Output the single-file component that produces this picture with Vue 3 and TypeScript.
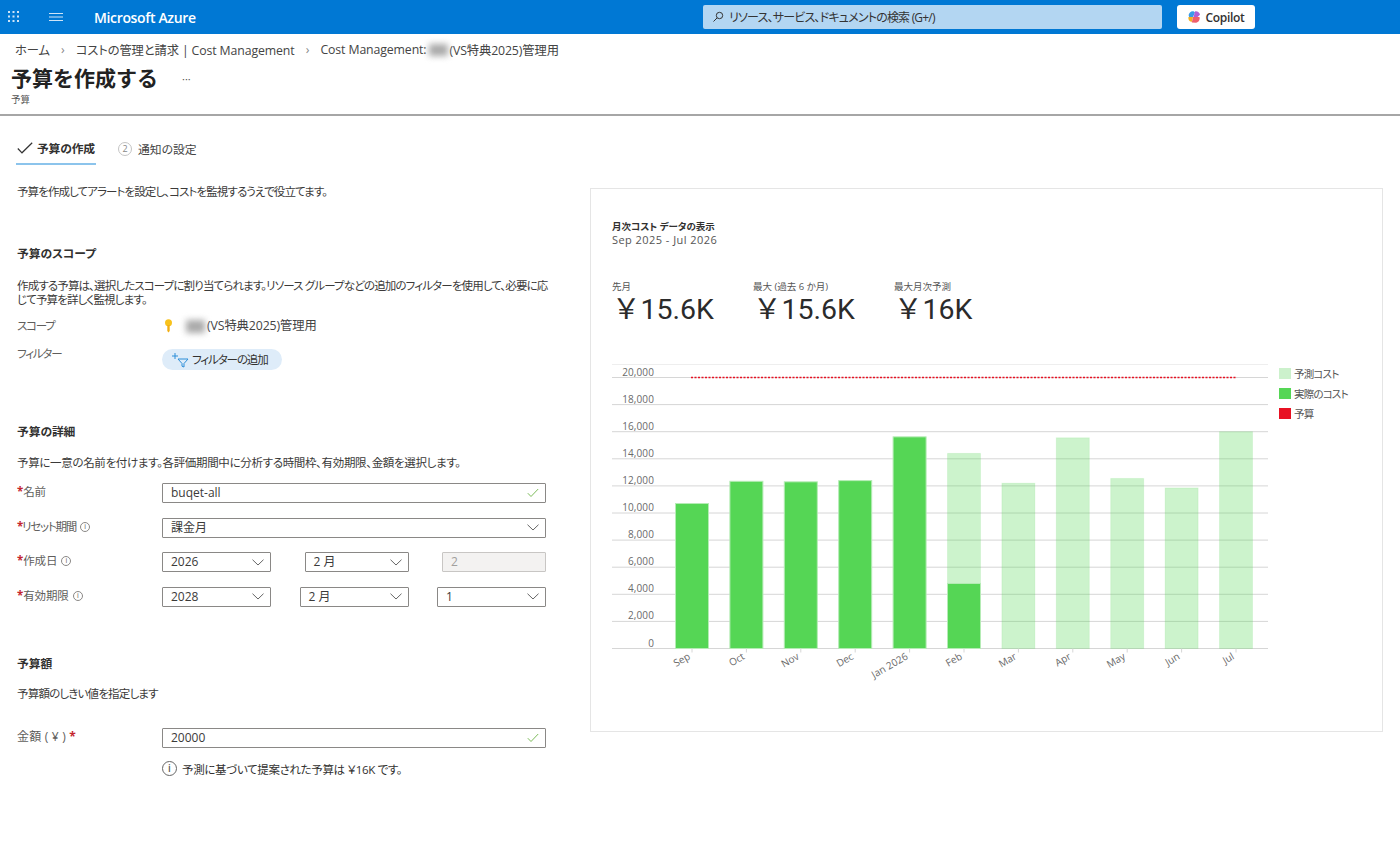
<script setup lang="ts">
interface Bar { label: string; forecast?: number; actual?: number }
const Y0 = 648.5
const SCALE = 271 / 20000
const OX = 612
const OY = 360
const bars: Bar[] = [
  { label: 'Sep', actual: 10700 },
  { label: 'Oct', actual: 12340 },
  { label: 'Nov', actual: 12300 },
  { label: 'Dec', actual: 12390 },
  { label: 'Jan 2026', actual: 15620 },
  { label: 'Feb', forecast: 14400, actual: 4800 },
  { label: 'Mar', forecast: 12200 },
  { label: 'Apr', forecast: 15550 },
  { label: 'May', forecast: 12550 },
  { label: 'Jun', forecast: 11850 },
  { label: 'Jul', forecast: 16000 }
]
const ticks = [20000, 18000, 16000, 14000, 12000, 10000, 8000, 6000, 4000, 2000, 0]
const barX = (i: number) => 675 + i * 54.4 - OX
const y = (v: number) => Y0 - v * SCALE - OY
const h = (v: number) => v * SCALE
const fmt = (v: number) => v.toLocaleString('en-US')
const legend = [
  { label: '予測コスト', color: '#ccf1cc' },
  { label: '実際のコスト', color: '#55d655' },
  { label: '予算', color: '#e81123' }
]
const kpis = [
  { label: '先月', value: '￥15.6K' },
  { label: '最大 (過去 6 か月)', value: '￥15.6K' },
  { label: '最大月次予測', value: '￥16K' }
]
</script>

<template>
  <div class="page">
    <header class="topbar">
      <svg class="waffle" width="12" height="12" viewBox="0 0 12 12" fill="#cfe4f7">
        <g v-for="r in 3" :key="r">
          <rect v-for="c in 3" :key="c" :x="(c - 1) * 4.5" :y="(r - 1) * 4.5" width="2" height="2" />
        </g>
      </svg>
      <svg class="burger" width="14" height="10" viewBox="0 0 14 10" stroke="#cfe4f7" stroke-width="1">
        <path d="M0 1.5h14M0 5h14M0 8.5h14" />
      </svg>
      <div class="brand">Microsoft Azure</div>
      <div class="search">
        <svg width="12" height="12" viewBox="0 0 12 12" fill="none" stroke="#333" stroke-width="1">
          <circle cx="7.5" cy="4.5" r="3.2" />
          <path d="M5.2 6.8 1.5 10.5" />
        </svg>
        <span>リソース、サービス、ドキュメントの検索 (G+/)</span>
      </div>
      <button class="copilot">
        <svg width="14" height="14" viewBox="0 0 14 14">
          <path d="M3 2.5C4.5.8 7 1 8 2.5L6 7H2.2C1.2 5.5 1.8 3.6 3 2.5Z" fill="#3a9be8" />
          <path d="M8 1.5c2.2-.6 4.5 1 5 3.3L10.500 7H6.500Z" fill="#b05ed6" />
          <path d="M1.500 7H6L5 11.500C3 12.500 .8 9.500 1.500 7Z" fill="#f4b020" />
          <path d="M6 7h6.500c.8 2.500-1 5.500-3.500 5.800L4.800 12.500Z" fill="#ef5f6b" />
        </svg>
        <span>Copilot</span>
      </button>
    </header>

    <nav class="crumbs">
      <span>ホーム</span><i>›</i>
      <span>コストの管理と請求 | Cost Management</span><i>›</i>
      <span>Cost Management:<b class="blur b1"></b>(VS特典2025)管理用</span>
    </nav>

    <div class="titlebar">
      <div class="title-row">
        <h1>予算を作成する</h1>
        <span class="more">···</span>
      </div>
      <div class="subtitle">予算</div>
    </div>

    <div class="tabs">
      <div class="tab active">
        <svg width="16" height="12" viewBox="0 0 16 12" fill="none" stroke="#333" stroke-width="1.2">
          <path d="M.8 6.500 5 10.800 15.200.8" />
        </svg>
        <span>予算の作成</span>
      </div>
      <div class="tab second">
        <span class="step">2</span>
        <span>通知の設定</span>
      </div>
    </div>

    <main class="main">
      <section class="form">
        <p class="intro">予算を作成してアラートを設定し、コストを監視するうえで役立てます。</p>

        <h2 class="h-scope">予算のスコープ</h2>
        <p class="desc d-scope">作成する予算は、選択したスコープに割り当てられます。リソース グループなどの追加のフィルターを使用して、必要に応<br />じて予算を詳しく監視します。</p>
        <div class="row r-scope">
          <label class="kana">スコープ</label>
          <div class="scope-val">
            <svg width="9" height="14" viewBox="0 0 9 14">
              <circle cx="4.500" cy="3.800" r="3.500" fill="#f8c21c" />
              <path d="M3.300 6h2.400v6L4.500 13.500 3.300 12Z" fill="#f2ae12" />
            </svg>
            <b class="blur b2"></b>
            <span>(VS特典2025)管理用</span>
          </div>
        </div>
        <div class="row r-filter">
          <label class="kana">フィルター</label>
          <button class="pill">
            <svg width="18" height="16" viewBox="0 0 18 16" fill="none" stroke="#2d8ed8" stroke-width="1">
              <path d="M4 1v6M1 4h6" />
              <path d="M7 7h10l-4 4.500V15l-2-.8v-2.700Z" />
            </svg>
            <span>フィルターの追加</span>
          </button>
        </div>

        <h2 class="h-detail">予算の詳細</h2>
        <p class="desc d-detail">予算に一意の名前を付けます。各評価期間中に分析する時間枠、有効期限、金額を選択します。</p>

        <div class="row field">
          <label><em>*</em>名前</label>
          <div class="input grow"><span>buqet-all</span><svg class="ok" width="12" height="10" viewBox="0 0 12 10"><path d="M.8 5.200 4 8.500 11.200 1" /></svg></div>
        </div>
        <div class="row field">
          <label class="kana"><em>*</em>リセット期間<span class="inf">i</span></label>
          <div class="input grow"><span>課金月</span><svg class="chev" width="12" height="7" viewBox="0 0 12 7"><path d="M.5.700 6 6 11.500.700" /></svg></div>
        </div>
        <div class="row field">
          <label><em>*</em>作成日<span class="inf">i</span></label>
          <div class="trio t1">
            <div class="input"><span>2026</span><svg class="chev" width="12" height="7" viewBox="0 0 12 7"><path d="M.5.700 6 6 11.500.700" /></svg></div>
            <div class="input"><span>2 月</span><svg class="chev" width="12" height="7" viewBox="0 0 12 7"><path d="M.5.700 6 6 11.500.700" /></svg></div>
            <div class="input disabled"><span>2</span></div>
          </div>
        </div>
        <div class="row field">
          <label><em>*</em>有効期限<span class="inf">i</span></label>
          <div class="trio t2">
            <div class="input"><span>2028</span><svg class="chev" width="12" height="7" viewBox="0 0 12 7"><path d="M.5.700 6 6 11.500.700" /></svg></div>
            <div class="input"><span>2 月</span><svg class="chev" width="12" height="7" viewBox="0 0 12 7"><path d="M.5.700 6 6 11.500.700" /></svg></div>
            <div class="input"><span>1</span><svg class="chev" width="12" height="7" viewBox="0 0 12 7"><path d="M.5.700 6 6 11.500.700" /></svg></div>
          </div>
        </div>

        <h2 class="h-amount">予算額</h2>
        <p class="desc d-amount">予算額のしきい値を指定します</p>
        <div class="row field f-amount">
          <label class="amount-label">金額 ( ¥ ) <em>*</em></label>
          <div class="input grow"><span>20000</span><svg class="ok" width="12" height="10" viewBox="0 0 12 10"><path d="M.8 5.200 4 8.500 11.200 1" /></svg></div>
        </div>
        <div class="hint">
          <span class="inf big">i</span>
          <span>予測に基づいて提案された予算は ￥16K です。</span>
        </div>
      </section>

      <aside class="card">
        <div class="card-title">月次コスト データの表示</div>
        <div class="card-range">Sep 2025 - Jul 2026</div>
        <div class="kpis">
          <div v-for="k in kpis" :key="k.label" class="kpi">
            <div class="kpi-label">{{ k.label }}</div>
            <div class="kpi-value">{{ k.value }}</div>
          </div>
        </div>
        <div class="chart">
          <svg width="656" height="340" viewBox="0 0 656 340">
            <line x1="0" x2="656" y1="4.500" y2="4.500" stroke="#eee" />
            <g v-for="t in ticks" :key="t">
              <line x1="0" x2="656" :y1="y(t)" :y2="y(t)" stroke="#d6d6d6" />
              <text class="tick" x="42" :y="y(t) - 2" text-anchor="end">{{ fmt(t) }}</text>
            </g>
            <g v-for="(b, i) in bars" :key="b.label">
              <rect v-if="b.forecast" :x="barX(i) + 0.5" :y="y(b.forecast)" width="33" :height="h(b.forecast)" fill="#55d655" fill-opacity="0.3" stroke="#55d655" stroke-opacity="0.12" />
              <rect v-if="b.actual" :x="barX(i) + 0.5" :y="y(b.actual)" width="33" :height="h(b.actual)" fill="#55d655" stroke="#b5ecb5" />
              <line :x1="barX(i) + 17" :x2="barX(i) + 17" :y1="Y0 - OY" :y2="Y0 - OY + 4" stroke="#d6d6d6" />
              <text class="xlab" text-anchor="end" :transform="`translate(${barX(i) + 16} ${Y0 - OY + 10}) rotate(-30)`">{{ b.label }}</text>
            </g>
            <line :x1="691 - OX" :x2="1236 - OX" :y1="y(20000)" :y2="y(20000)" stroke="#e81123" stroke-width="1.500" stroke-dasharray="2 1.500" />
          </svg>
          <ul class="legend">
            <li v-for="l in legend" :key="l.label">
              <i :style="{ background: l.color }"></i>{{ l.label }}
            </li>
          </ul>
        </div>
      </aside>
    </main>
  </div>
</template>

<style scoped>
.page {
  width: 1400px;
  height: 853px;
  overflow: hidden;
  background: #fff;
  color: #323130;
  font-family: "Open Sans", "Noto Sans CJK JP", sans-serif;
  font-size: 12px;
  font-feature-settings: "palt";
}
.topbar {
  height: 34px;
  background: #0078d4;
  display: flex;
  align-items: center;
  padding-left: 8px;
  box-sizing: border-box;
}
.burger { margin-left: 29px; }
.brand {
  margin-left: 31px;
  width: 101px;
  color: #fff;
  font-size: 14px;
  font-weight: 600;
  letter-spacing: -0.350px;
  white-space: nowrap;
}
.search {
  margin-left: 508px;
  width: 459px;
  height: 24px;
  background: #b3d6f2;
  border-radius: 2px;
  display: flex;
  align-items: center;
  gap: 5px;
  padding-left: 9px;
  box-sizing: border-box;
  font-size: 12px;
  letter-spacing: -0.800px;
  color: #333;
}
.copilot {
  margin-left: 15px;
  width: 78px;
  height: 24px;
  background: #fff;
  border: 0;
  border-radius: 3px;
  display: flex;
  align-items: center;
  justify-content: center;
  gap: 4px;
  padding: 0;
  font: 600 12px "Open Sans", sans-serif;
  letter-spacing: -0.300px;
  color: #323130;
}
.crumbs {
  height: 31px;
  padding-left: 15px;
  display: flex;
  align-items: center;
  font-size: 12.300px;
  white-space: nowrap;
  letter-spacing: -0.120px;
  color: #444;
}
.crumbs i {
  font-style: normal;
  width: 26px;
  text-align: center;
  color: #888;
}
.crumbs span { display: inline-flex; align-items: center; }
.blur {
  display: inline-block;
  background: #aaa;
  filter: blur(3px);
}
.b1 { width: 19px; height: 12px; margin: 0 1px 0 3px; }
.b2 { width: 19px; height: 13px; margin: 0 2px 0 13px; }
.titlebar {
  height: 49px;
  padding-left: 11px;
  border-bottom: 2px solid #a6a6a6;
  box-sizing: content-box;
}
.title-row { display: flex; align-items: center; height: 26px; }
h1 {
  margin: 0;
  font-size: 21px;
  line-height: 26px;
  font-weight: 700;
  color: #222;
  white-space: nowrap;
  font-feature-settings: normal;
}
.more { margin-left: 24px; font-size: 11px; color: #555; }
.subtitle { font-size: 9.500px; line-height: 16px; margin-top: 1px; color: #555; }
.tabs {
  display: flex;
  padding: 21px 0 0 16px;
  height: 28px;
  box-sizing: content-box;
}
.tab { display: flex; align-items: center; gap: 4px; height: 26px; box-sizing: border-box; }
.tab.active {
  width: 80px;
  font-weight: 700;
  font-size: 11.800px;
  letter-spacing: -0.200px;
  border-bottom: 2px solid #8cc4ec;
  padding: 0 0 5px 1px;
  height: 28px;
  white-space: nowrap;
}
.tab.second {
  margin-left: 22px;
  gap: 6px;
  font-size: 11.800px;
  color: #444;
  white-space: nowrap;
  padding-bottom: 3px;
}
.step {
  width: 14px;
  height: 14px;
  border: 1.500px solid #c4c4c4;
  box-sizing: border-box;
  border-radius: 50%;
  font-size: 9px;
  display: flex;
  align-items: center;
  justify-content: center;
  color: #888;
}
.main {
  display: flex;
  padding: 0 17px;
  gap: 44px;
}
.form { width: 529px; flex: none; font-size: 11.500px; letter-spacing: -0.100px; }
p { margin: 0; color: #3b3a39; }
.intro { line-height: 16px; margin-top: 19px; letter-spacing: -0.900px; white-space: nowrap; }
h2 {
  margin: 0;
  font-size: 11.800px;
  font-weight: 700;
  line-height: 16px;
  color: #323130;
}
.h-scope { margin-top: 45px; }
.desc { line-height: 14px; white-space: nowrap; }
.d-scope { margin-top: 18px; letter-spacing: -0.860px; }
.row { display: flex; }
.row label {
  width: 145px;
  flex: none;
  color: #605e5c;
  display: flex;
  align-items: flex-start;
  white-space: pre;
}
.row label.kana { letter-spacing: -1.200px; }
.r-scope { margin-top: 11px; height: 16px; line-height: 16px; }
.scope-val { display: flex; align-items: center; color: #444; margin-left: 2px; font-size: 12.300px; }
.r-filter { margin-top: 12px; height: 22px; line-height: 16px; }
.pill {
  height: 21px;
  width: 120px;
  margin-top: 3px;
  border: 0;
  border-radius: 11px;
  background: #deecf9;
  display: flex;
  align-items: center;
  gap: 3px;
  padding: 0 0 0 9px;
  font: inherit;
  letter-spacing: -1.100px;
  color: #323130;
  white-space: nowrap;
}
.h-detail { margin-top: 55px; }
.d-detail { margin-top: 17px; letter-spacing: -0.330px; }
.field { margin-top: 14px; height: 20px; line-height: 16px; }
.d-detail + .field { margin-top: 13px; }
.field label { padding-top: 1px; }
.field + .field { margin-top: 14.500px; }
em { font-style: normal; color: #c4262e; font-weight: 700; }
.input {
  height: 20px;
  box-sizing: border-box;
  border: 1px solid #8a8886;
  border-radius: 1px;
  display: flex;
  align-items: center;
  justify-content: space-between;
  padding: 0 6px 0 8px;
  font-size: 12px;
  letter-spacing: 0;
  color: #3b3a39;
  background: #fff;
}
.grow { width: 384px; }
.ok { fill: none; stroke: #7cbb5a; stroke-width: 1; }
.chev { fill: none; stroke: #666; stroke-width: 1; }
.trio { display: flex; width: 384px; justify-content: space-between; }
.t1 .input:nth-child(1) { width: 109px; }
.t1 .input:nth-child(2) { width: 104px; }
.t1 .input:nth-child(3) { width: 104px; }
.t2 .input:nth-child(1) { width: 109px; }
.t2 .input:nth-child(2) { width: 109px; }
.t2 .input:nth-child(3) { width: 109px; }
.disabled { background: #f3f2f1; border-color: #c8c6c4; color: #a19f9d; }
.inf {
  width: 10px;
  height: 10px;
  border: 1px solid #8a8886;
  border-radius: 50%;
  box-sizing: border-box;
  font-size: 7px;
  line-height: 8px;
  letter-spacing: 0;
  text-align: center;
  color: #605e5c;
  margin: 3px 0 0 4px;
  flex: none;
}
.inf.big {
  width: 15px;
  height: 15px;
  font-size: 10px;
  line-height: 13px;
  margin: 0;
  font-weight: 600;
  border-color: #666;
}
.h-amount { margin-top: 48px; }
.d-amount { margin-top: 16px; letter-spacing: -0.800px; }
.field.f-amount { margin-top: 27px; }
.row label.amount-label { font-size: 12px; letter-spacing: 0.200px; }
.hint {
  margin: 13px 0 0 145px;
  display: flex;
  align-items: center;
  gap: 5px;
  letter-spacing: -0.350px;
}
.card {
  width: 793px;
  height: 544px;
  margin-top: 23px;
  box-sizing: border-box;
  border: 1px solid #e5e5e5;
  padding: 32px 0 0 21px;
}
.card-title { font-size: 9.500px; font-weight: 700; line-height: 12px; }
.card-range { font-size: 11px; line-height: 13px; color: #555; letter-spacing: 0.450px; }
.kpis { display: flex; margin-top: 35px; }
.kpi { width: 141px; }
.kpi-label { font-size: 9.500px; line-height: 11px; color: #555; white-space: nowrap; }
.kpi-value {
  font-size: 28.500px;
  line-height: 30px;
  margin-top: 3px;
  font-weight: 400;
  color: #2b2b2b;
  white-space: nowrap;
  font-family: Roboto, "Noto Sans CJK JP", sans-serif;
  font-feature-settings: normal;
}
.chart { display: flex; margin-top: 35px; }
.tick { font-size: 10px; fill: #6a6a6a; letter-spacing: 0.100px; }
.xlab { font-size: 10px; fill: #6a6a6a; }
.legend {
  list-style: none;
  margin: 3px 0 0 11px;
  padding: 0;
  font-size: 10.500px;
  letter-spacing: -0.800px;
  color: #555;
}
.legend li {
  height: 20px;
  display: flex;
  align-items: center;
  gap: 3px;
  white-space: nowrap;
}
.legend i { width: 12px; height: 11px; display: block; }
</style>
